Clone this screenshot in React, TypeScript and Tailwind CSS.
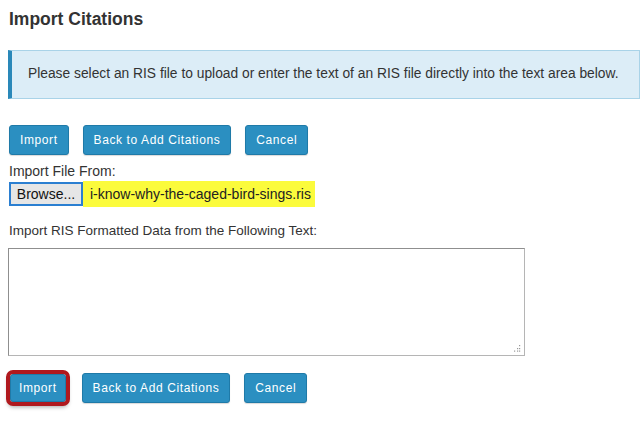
export default function App() {
  const base =
    'rounded-[3px] bg-[#2b8fc1] border border-[#1f7aa8] text-white text-[12px] tracking-[0.05em] shadow-[0_1px_1px_rgba(0,0,0,0.15)]';
  const btn = `${base} h-[30px] px-[10px]`;

  return (
    <div
      className="w-[640px] h-[424px] bg-white text-[#333] overflow-hidden"
      style={{ fontFamily: '"Liberation Sans", Arial, sans-serif' }}
    >
      <div className="pl-[9px] pt-[9px]">
        <h1 className="text-[17.5px] font-bold text-[#333] leading-[20px]">Import Citations</h1>
      </div>

      <div className="ml-[8px] mt-[21px] h-[49px] bg-[#dcedf7] border border-[#a9d3e8] border-l-[4px] border-l-[#2a88b9] flex items-center pl-[16px]">
        <p className="text-[13.8px] text-[#333] whitespace-nowrap">
          Please select an RIS file to upload or enter the text of an RIS file directly into the text area below.
        </p>
      </div>

      <div className="flex gap-[14px] ml-[9px] mt-[26px]">
        <button className={btn}>Import</button>
        <button className={btn}>Back to Add Citations</button>
        <button className={btn}>Cancel</button>
      </div>

      <div className="ml-[9px] mt-[8px] text-[14px] leading-[16px] text-[#333]">Import File From:</div>
      <div className="ml-[9px] mt-[2px] flex items-center">
        <button className="h-[24px] w-[74px] bg-[#e6e6e6] border-2 border-[#2b7fd1] text-[14px] text-[#111] leading-none">
          Browse...
        </button>
        <span className="h-[26px] flex items-center bg-[#fbfb3c] pl-[7px] pr-[4px] text-[14px] text-[#222]">
          i-know-why-the-caged-bird-sings.ris
        </span>
      </div>

      <div className="ml-[9px] mt-[16px] text-[13.5px] leading-[16px] text-[#333]">
        Import RIS Formatted Data from the Following Text:
      </div>
      <div className="ml-[8px] mt-[9px] relative w-[517px] h-[108px] border border-[#8f8f8f] border-r-[#b5b5b5] border-b-[#b5b5b5] bg-white">
        <svg className="absolute right-[3px] bottom-[3px]" width="7" height="7" viewBox="0 0 7 7">
          <rect x="5" y="0" width="1.2" height="1.2" fill="#999" />
          <rect x="3" y="3" width="1.2" height="1.2" fill="#999" />
          <rect x="5" y="3" width="1.2" height="1.2" fill="#999" />
          <rect x="0" y="5.5" width="1.2" height="1.2" fill="#999" />
          <rect x="3" y="5.5" width="1.2" height="1.2" fill="#999" />
          <rect x="5" y="5.5" width="1.2" height="1.2" fill="#999" />
        </svg>
      </div>

      <div className="flex items-center ml-[10px] mt-[17px]">
        <button
          className={`${base} h-[28px] px-[8px] outline-[4px] outline-[#b0191e] outline-offset-0 shadow-[0_3px_4px_2px_rgba(0,0,0,0.35)]`}
          style={{ outlineStyle: 'solid' }}
        >
          Import
        </button>
        <button className={`${btn} ml-[16px]`}>Back to Add Citations</button>
        <button className={`${btn} ml-[14px]`}>Cancel</button>
      </div>
    </div>
  );
}
